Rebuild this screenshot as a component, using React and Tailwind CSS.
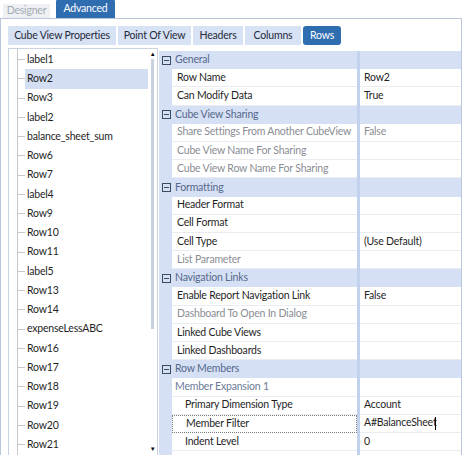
import React from 'react'

const treeItems = [
  'label1', 'Row2', 'Row3', 'label2', 'balance_sheet_sum', 'Row6', 'Row7', 'label4',
  'Row9', 'Row10', 'Row11', 'label5', 'Row13', 'Row14', 'expenseLessABC', 'Row16',
  'Row17', 'Row18', 'Row19', 'Row20', 'Row21',
]

const rows = [
  { type: 'cat', name: 'General' },
  { name: 'Row Name', value: 'Row2' },
  { name: 'Can Modify Data', value: 'True' },
  { type: 'cat', name: 'Cube View Sharing' },
  { name: 'Share Settings From Another CubeView', value: 'False', off: true },
  { name: 'Cube View Name For Sharing', off: true },
  { name: 'Cube View Row Name For Sharing', off: true },
  { type: 'cat', name: 'Formatting' },
  { name: 'Header Format' },
  { name: 'Cell Format' },
  { name: 'Cell Type', value: '(Use Default)' },
  { name: 'List Parameter', off: true },
  { type: 'cat', name: 'Navigation Links' },
  { name: 'Enable Report Navigation Link', value: 'False' },
  { name: 'Dashboard To Open In Dialog', off: true },
  { name: 'Linked Cube Views' },
  { name: 'Linked Dashboards' },
  { type: 'cat', name: 'Row Members' },
  { type: 'sub', name: 'Member Expansion 1' },
  { name: 'Primary Dimension Type', value: 'Account', indent: true },
  { name: 'Member Filter', value: 'A#BalanceSheet', indent: true, focus: true },
  { name: 'Indent Level', value: '0', indent: true },
]

function Collapse() {
  return (
    <svg width="9" height="9" viewBox="0 0 9 9" className="shrink-0">
      <rect x="0.5" y="0.5" width="8" height="8" fill="none" stroke="#3b4a63" />
      <line x1="2" y1="4.5" x2="7" y2="4.5" stroke="#3b4a63" />
    </svg>
  )
}

function GridRow({ r }) {
  if (r.type === 'cat') {
    return (
      <div className="flex h-[18.2px] bg-[#d5e0f4]">
        <div className="w-[13px] flex items-center justify-center pl-[1px]"><Collapse /></div>
        <div className="w-[185px] flex items-center pl-[3px] text-[#56698c] whitespace-nowrap">{r.name}</div>
        <div className="w-[3px] bg-[#c3d2ec]"></div>
        <div className="flex-1"></div>
      </div>
    )
  }
  if (r.type === 'sub') {
    return (
      <div className="flex h-[18.2px]">
        <div className="w-[13px] bg-[#d5e0f4]"></div>
        <div className="w-[185px] flex items-center pl-[3px] text-[#6b7b98] border-b border-[#e9ecf1] whitespace-nowrap">{r.name}</div>
        <div className="w-[3px] bg-[#c3d2ec]"></div>
        <div className="flex-1 border-b border-[#e9ecf1]"></div>
      </div>
    )
  }
  return (
    <div className="flex h-[18.2px]">
      <div className="w-[13px] bg-[#d5e0f4]"></div>
      <div className={`w-[185px] flex items-center whitespace-nowrap overflow-hidden ${r.indent ? 'pl-[13px]' : 'pl-[5px]'} ${r.off ? 'text-[#8a8d93]' : 'text-[#1f1f1f]'} ${r.focus ? 'border border-dotted border-[#7a7a7a] pl-[12px]' : 'border-b border-[#e9ecf1]'}`}>
        {r.name}
      </div>
      <div className="w-[3px] bg-[#c3d2ec]"></div>
      <div className={`flex-1 flex items-center pl-[4px] border-b border-[#e9ecf1] whitespace-nowrap ${r.off ? 'text-[#8a8d93]' : 'text-[#1f1f1f]'}`}>
        {r.value}
        {r.focus && <span className="inline-block w-px h-[13px] bg-black ml-[-1px]"></span>}
      </div>
    </div>
  )
}

export default function App() {
  return (
    <div className="w-[462px] h-[455px] bg-white overflow-hidden text-[10.5px] tracking-[-0.2px] flex flex-col" style={{ fontFamily: 'Lato, "Open Sans", sans-serif' }}>
      <div className="h-[19px] flex items-end border-b border-[#b9c7dc] shrink-0">
        <div className="ml-[3px] h-[14px] w-[47px] flex items-center justify-center bg-[#eef0f3] text-[#a4abb4]">Designer</div>
        <div className="ml-[6px] h-[19px] w-[59px] flex items-center justify-center bg-[#2f6db1] text-white rounded-t-[3px]">Advanced</div>
      </div>
      <div className="flex-1 flex flex-col border-l border-r border-[#b9c7dc] min-h-0">
        <div className="flex gap-[2px] ml-[7px] mt-[7px] h-[19px] shrink-0">
          <div className="w-[108px] flex items-center justify-center bg-[#d7e2f4] text-[#1f2a3a]">Cube View Properties</div>
          <div className="w-[73px] flex items-center justify-center bg-[#d7e2f4] text-[#1f2a3a]">Point Of View</div>
          <div className="w-[50px] flex items-center justify-center bg-[#d7e2f4] text-[#1f2a3a]">Headers</div>
          <div className="w-[56px] flex items-center justify-center bg-[#d7e2f4] text-[#1f2a3a]">Columns</div>
          <div className="w-[38px] flex items-center justify-center bg-[#2f6db1] text-white rounded-[3px]">Rows</div>
        </div>
        <div className="flex mt-[3px] flex-1 min-h-0">
          <div className="ml-[7px] w-[150px] border border-[#c9d2df] border-b-0 flex shrink-0 relative">
            <div className="flex-1 pt-[1px] relative">
              <div className="absolute left-[8px] top-0 bottom-0 w-px bg-[#c8c8c8]"></div>
              {treeItems.map((t) => (
                <div key={t} className="flex items-center h-[19.25px]">
                  <div className="ml-[9px] w-[7px] h-px bg-[#c8c8c8]"></div>
                  <div className={`flex-1 h-full flex items-center pl-[2px] text-[#1f1f1f] ${t === 'Row2' ? 'bg-[#d3def3]' : ''}`}>{t}</div>
                </div>
              ))}
            </div>
            <div className="w-[9px] flex flex-col items-center">
              <span className="text-[6px] leading-[8px] mt-[1px]">▲</span>
              <div className="w-[3px] h-[270px] bg-[#c7d1df] mt-[1px]"></div>
              <div className="flex-1"></div>
              <span className="text-[6px] leading-[8px] mb-[2px]">▼</span>
            </div>
          </div>
          <div className="flex-1 ml-[1px] pt-[3px] flex flex-col min-w-0">
            {rows.map((r, i) => (
              <GridRow key={i} r={r} />
            ))}
            <div className="flex flex-1">
              <div className="w-[13px] bg-[#d5e0f4]"></div>
              <div className="w-[185px]"></div>
              <div className="w-[3px] bg-[#c3d2ec]"></div>
            </div>
          </div>
        </div>
      </div>
    </div>
  )
}
